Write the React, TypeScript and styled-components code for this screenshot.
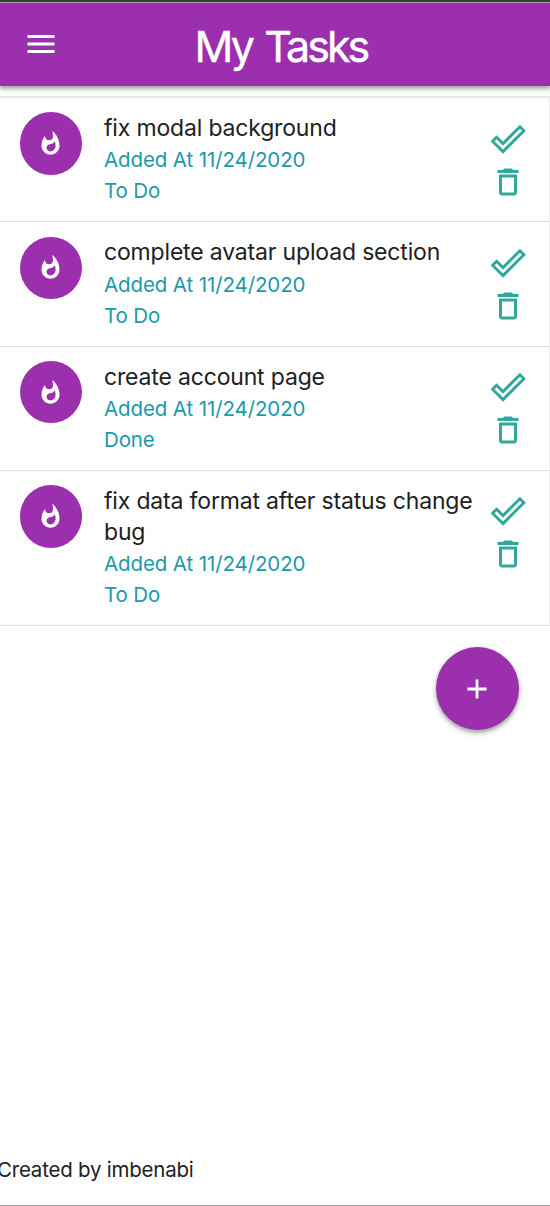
import React from "react";
import styled, { createGlobalStyle } from "styled-components";

const PURPLE = "#9b2fae";
const TEAL = "#32a89c";

const GlobalStyle = createGlobalStyle`
  *, *::before, *::after { box-sizing: border-box; }
  html, body { margin: 0; padding: 0; background: #fff; }
  body {
    font-family: Inter, "Liberation Sans", sans-serif;
    color: #212121;
    overflow: hidden;
  }
  h1, p { margin: 0; font-weight: 400; }
`;

const Page = styled.div`
  display: flex;
  flex-direction: column;
  height: 1206px;
  overflow: hidden;
  border-top: 2px solid #3d3a3b;
  border-bottom: 1px solid #a6a6a6;
`;

const NavBar = styled.header`
  display: grid;
  grid-template-columns: 81px 1fr 69px;
  align-items: center;
  flex: none;
  height: 84px;
  border-top: 1px solid #a9a0aa;
  background: ${PURPLE};
  color: #fff;
  box-shadow: 0 3px 3px 0 rgba(0, 0, 0, 0.14), 0 4px 7px 0 rgba(0, 0, 0, 0.12),
    0 1px 5px 0 rgba(0, 0, 0, 0.2);
`;

const PlainButton = styled.button`
  display: flex;
  padding: 0;
  border: 0;
  background: none;
  color: inherit;
`;

const MenuButton = styled(PlainButton)`
  justify-self: center;
  margin-bottom: 3px;
`;

const Title = styled.h1`
  padding-top: 1px;
  text-align: center;
  font-size: 43px;
  font-weight: 400;
  line-height: 84px;
  letter-spacing: -2.9px;
  word-spacing: 3px;
  white-space: nowrap;
  -webkit-text-stroke: 0.4px currentColor;
`;

const TaskList = styled.ul`
  flex: none;
  list-style: none;
  margin: 10px 0 0;
  padding: 0;
  border-top: 2px solid #e8e8e8;
  border-right: 1px solid #ececec;
`;

const TaskRow = styled.li`
  display: flex;
  align-items: flex-start;
  padding: 14.3px 23px 14.8px 19.5px;
  border-bottom: 1px solid #dedede;
`;

const Avatar = styled.span`
  display: flex;
  align-items: center;
  justify-content: center;
  flex: none;
  width: 62.5px;
  height: 62.5px;
  border-radius: 50%;
  background: ${PURPLE};
  color: #fff;
`;

const TaskText = styled.div`
  flex: 1;
  min-width: 0;
  padding: 0.9px 0 0 22px;
`;

const TaskTitle = styled.p`
  font-size: 23px;
  line-height: 31.1px;
  letter-spacing: -0.17px;
  width: 380px;
`;

const TaskMeta = styled.p`
  font-size: 20.5px;
  line-height: 31.1px;
  letter-spacing: -0.11px;
  color: #1b9aaa;
`;

const Actions = styled.div`
  display: flex;
  flex-direction: column;
  align-items: center;
  flex: none;
  color: ${TEAL};
  padding-top: 11.3px;
`;

const DeleteButton = styled(PlainButton)`
  margin-top: 10px;
`;

const AddButton = styled.button`
  display: flex;
  align-items: center;
  justify-content: center;
  flex: none;
  align-self: flex-end;
  width: 83px;
  height: 83px;
  margin: 21px 31.5px 0 0;
  padding: 0;
  border: 0;
  border-radius: 50%;
  background: ${PURPLE};
  color: #fff;
  box-shadow: 0 3px 3px 0 rgba(0, 0, 0, 0.14), 0 4px 7px 0 rgba(0, 0, 0, 0.12),
    0 1px 5px 0 rgba(0, 0, 0, 0.2);
`;

const Footer = styled.footer`
  margin: auto 0 20px -3px;
  font-size: 20.5px;
  line-height: 31px;
  letter-spacing: -0.22px;
`;

const MenuIcon = () => (
  <svg width="36" height="36" viewBox="0 0 24 24" fill="currentColor">
    <path d="M3 18h18v-2H3v2zm0-5h18v-2H3v2zm0-7v2h18V6H3z" />
  </svg>
);

const FlameIcon = () => (
  <svg width="27" height="27" viewBox="0 0 24 24" fill="currentColor">
    <path d="M13.5.67s.74 2.65.74 4.8c0 2.06-1.35 3.73-3.41 3.73-2.07 0-3.63-1.67-3.63-3.73l.03-.36C5.21 7.51 4 10.62 4 14c0 4.42 3.58 8 8 8s8-3.58 8-8C20 8.61 17.41 3.8 13.5.67zM11.71 19c-1.78 0-3.22-1.4-3.22-3.14 0-1.62 1.05-2.76 2.81-3.12 1.77-.36 3.6-1.21 4.62-2.58.39 1.29.59 2.65.59 4.04 0 2.65-2.15 4.8-4.8 4.8z" />
  </svg>
);

const CheckIcon = () => (
  <svg width="36" height="30" viewBox="0 0 36 30" fill="none" stroke="currentColor" strokeWidth="2.9">
    <path d="M2.6 17.2L13 27.6L33.9 6.7L29.9 2.7L13 19.6L6.6 13.2Z" />
  </svg>
);

const TrashIcon = () => (
  <svg width="36" height="36" viewBox="0 0 24 24" fill="currentColor">
    <path d="M6 19c0 1.1.9 2 2 2h8c1.1 0 2-.9 2-2V7H6v12zM8 9h8v10H8V9zm7.5-5l-1-1h-5l-1 1H5v2h14V4z" />
  </svg>
);

const PlusIcon = () => (
  <svg width="20" height="20" viewBox="0 0 20 20" fill="none" stroke="currentColor" strokeWidth="2.8">
    <path d="M10 .4V19.6M.4 10H19.6" />
  </svg>
);

const tasks = [
  { title: "fix modal background", date: "11/24/2020", status: "To Do" },
  { title: "complete avatar upload section", date: "11/24/2020", status: "To Do" },
  { title: "create account page", date: "11/24/2020", status: "Done" },
  { title: "fix data format after status change bug", date: "11/24/2020", status: "To Do" },
];

export default function App() {
  return (
    <>
      <GlobalStyle />
      <Page>
        <NavBar>
          <MenuButton aria-label="Menu">
            <MenuIcon />
          </MenuButton>
          <Title>My Tasks</Title>
        </NavBar>
        <TaskList>
          {tasks.map((task) => (
            <TaskRow key={task.title}>
              <Avatar>
                <FlameIcon />
              </Avatar>
              <TaskText>
                <TaskTitle>{task.title}</TaskTitle>
                <TaskMeta>Added At {task.date}</TaskMeta>
                <TaskMeta>{task.status}</TaskMeta>
              </TaskText>
              <Actions>
                <PlainButton aria-label="Toggle status">
                  <CheckIcon />
                </PlainButton>
                <DeleteButton aria-label="Delete task">
                  <TrashIcon />
                </DeleteButton>
              </Actions>
            </TaskRow>
          ))}
        </TaskList>
        <AddButton aria-label="Add task">
          <PlusIcon />
        </AddButton>
        <Footer>Created by imbenabi</Footer>
      </Page>
    </>
  );
}
